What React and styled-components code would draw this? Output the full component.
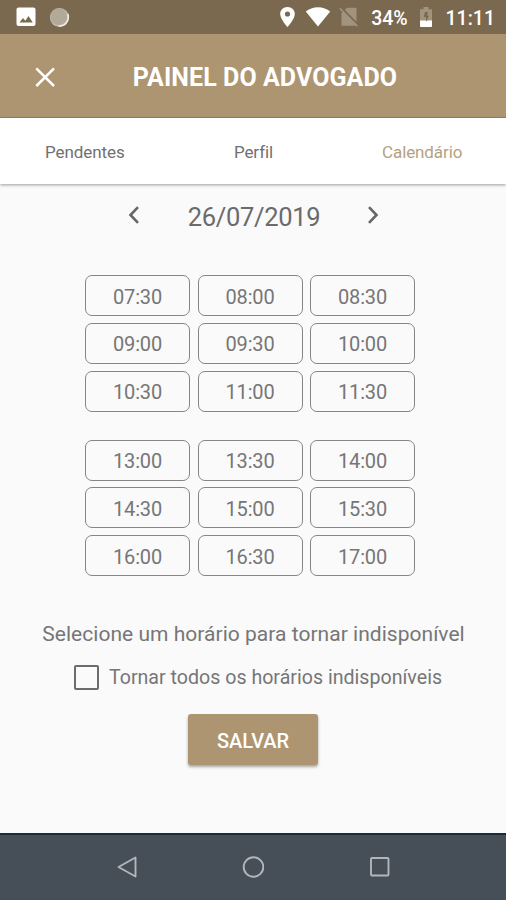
import React, { useState } from "react";
import styled, { createGlobalStyle } from "styled-components";

const GlobalStyle = createGlobalStyle`
  *, *::before, *::after { box-sizing: border-box; }
  body { margin: 0; background: #fafafa; }
  button { font: inherit; border: 0; padding: 0; margin: 0; background: none; }
`;

const Screen = styled.div`
  width: 506px;
  height: 900px;
  display: flex;
  flex-direction: column;
  overflow: hidden;
  background: #fafafa;
  color: #767676;
  font-family: Roboto, "Liberation Sans", sans-serif;
`;

const StatusBar = styled.div`
  height: 34px;
  flex: none;
  display: flex;
  justify-content: space-between;
  padding: 0 11px 0 16px;
  background: #7a694f;
  color: #fff;
`;

const StatusGroup = styled.div`
  display: flex;
  align-items: center;
`;

const StatusText = styled.span`
  font-size: 19.5px;
  line-height: 34px;
  padding-top: 3px;
  font-weight: 500;
  letter-spacing: ${(p) => p.$spacing};
  margin-left: ${(p) => p.$gap};
`;

const Glyph = styled.svg`
  display: block;
  flex: none;
  margin-left: ${(p) => p.$gap || "0"};
`;

const Header = styled.header`
  height: 84px;
  flex: none;
  display: grid;
  grid-template-columns: 90px 1fr 66px;
  align-items: center;
  background: #ae9572;
  border-bottom: 1px solid #a3805c;
  color: #fff;
`;

const CloseButton = styled.button`
  width: 20px;
  height: 20px;
  margin: 2px 0 0 35px;
  color: inherit;
`;

const Title = styled.h1`
  margin: 4px 0 0;
  text-align: center;
  font-size: 25px;
  line-height: 30px;
  font-weight: 700;
  letter-spacing: 0.08px;
`;

const Tabs = styled.nav`
  height: 66px;
  flex: none;
  display: grid;
  grid-template-columns: repeat(3, 1fr);
  background: #fff;
  box-shadow: 0 1px 3px rgba(0, 0, 0, 0.38);
`;

const Tab = styled.button`
  padding: 1px 0 0 1px;
  font-size: 17px;
  letter-spacing: -0.1px;
  color: ${(p) => (p.$active ? "#b5a17e" : "#707070")};
`;

const Content = styled.main`
  flex: 1;
  display: flex;
  flex-direction: column;
  align-items: center;
`;

const DatePicker = styled.div`
  width: 252px;
  height: 30px;
  margin-top: 18px;
  display: flex;
  align-items: center;
  justify-content: space-between;
  color: #6b6b6b;
`;

const ArrowButton = styled.button`
  width: 14px;
  height: 20px;
  margin-top: -5px;
  color: #666;
`;

const DateLabel = styled.span`
  font-size: 25.5px;
  line-height: 30px;
  padding-left: 2px;
  letter-spacing: -0.3px;
`;

const SlotGrid = styled.div`
  width: 330px;
  margin: ${(p) => p.$top} 6px 0 0;
  display: grid;
  grid-template-columns: repeat(3, 105px);
  grid-auto-rows: 41px;
  gap: 6.8px 7.5px;
`;

const Slot = styled.button`
  padding-top: 2px;
  border: 1.5px solid #858585;
  border-radius: 7px;
  color: #767676;
  font-size: 20px;
  letter-spacing: -0.15px;
`;

const Hint = styled.p`
  margin: 45px 0 0 1px;
  white-space: nowrap;
  font-size: 21px;
  line-height: 26px;
  letter-spacing: 0.03px;
`;

const CheckRow = styled.label`
  margin: 17px 0 0 10px;
  display: flex;
  align-items: center;
  gap: 10px;
  height: 26px;
  white-space: nowrap;
  font-size: 19.6px;
`;

const CheckBox = styled.input`
  appearance: none;
  width: 25px;
  height: 25px;
  margin: 0;
  border: 2px solid #6c6c6c;
  border-radius: 2px;
  &:checked { background: #ae9572; }
`;

const CheckText = styled.span`
  letter-spacing: 0.01px;
  padding-top: 1px;
`;

const SaveButton = styled.button`
  width: 130px;
  height: 51px;
  margin: 24px 0 0 0;
  padding-top: 2px;
  border-radius: 3px;
  background: #ae9572;
  box-shadow: 0 2px 3px rgba(0, 0, 0, 0.34);
  color: #fff;
  font-size: 20px;
  font-weight: 500;
  letter-spacing: -0.1px;
`;

const SystemNav = styled.footer`
  height: 67px;
  flex: none;
  display: flex;
  justify-content: center;
  gap: 104px;
  padding-top: 21px;
  border-top: 2px solid #1c2b3b;
  background: #464e57;
`;

const NavButton = styled.button`
  width: 22px;
  height: 22px;
`;

const MORNING = ["07:30", "08:00", "08:30", "09:00", "09:30", "10:00", "10:30", "11:00", "11:30"];
const AFTERNOON = ["13:00", "13:30", "14:00", "14:30", "15:00", "15:30", "16:00", "16:30", "17:00"];

function Slots({ times, top }) {
  return (
    <SlotGrid $top={top}>
      {times.map((t) => (
        <Slot key={t}>{t}</Slot>
      ))}
    </SlotGrid>
  );
}

function Status() {
  return (
    <StatusBar>
      <StatusGroup>
        <Glyph width="20" height="20" viewBox="0 0 20 20">
          <rect x="0.5" y="0.5" width="19" height="18.5" rx="2" fill="#fff" />
          <path d="M3.5 15.5 7 11l2.3 2.8L12.5 9l4.3 6.5z" fill="#7a694f" />
        </Glyph>
        <Glyph $gap="13px" width="21" height="21" viewBox="0 0 21 21">
          <circle cx="10.5" cy="10.5" r="9.6" fill="#c3b9aa" />
          <circle cx="9.8" cy="9.6" r="8.3" fill="#b3a999" />
          <path d="M18.8 7A9 9 0 0 1 9.5 19" fill="none" stroke="#f2eee6" strokeWidth="1.5" />
        </Glyph>
      </StatusGroup>
      <StatusGroup>
        <Glyph width="15" height="20" viewBox="0 0 15 20">
          <path
            fillRule="evenodd"
            fill="#fff"
            d="M7.5 0C3.3 0 .2 3.1.2 7c0 5.1 7.3 13 7.3 13s7.3-7.9 7.3-13c0-3.9-3.1-7-7.3-7zm0 4.4a2.6 2.6 0 1 1 0 5.2 2.6 2.6 0 0 1 0-5.2z"
          />
        </Glyph>
        <Glyph $gap="10px" width="26" height="20" viewBox="0 0 26 20">
          <path d="M13 19.5.8 4.6C4 1.900 8.300.3 13 .3s9 1.600 12.200 4.300z" fill="#fff" />
        </Glyph>
        <Glyph $gap="8px" width="20" height="20" viewBox="0 0 20 20">
          <path d="M8 .8h8.500q1 0 1 1v17h-15V6.300z" fill="#a1937e" />
          <path d="M2 .5 20 18.800" stroke="#7a694f" strokeWidth="2" />
          <path d="M.8 1.300 18.500 19.300" stroke="#a1937e" strokeWidth="1.600" />
        </Glyph>
        <StatusText $gap="12px" $spacing="-0.1px">34%</StatusText>
        <Glyph $gap="11px" width="14" height="22" viewBox="0 0 14 22">
          <path d="M4.500 1h5v2.200H13V21H1V3.200h3.500z" fill="#a1937e" />
          <path d="M1 14.500h12V20q0 1-1 1H2q-1 0-1-1z" fill="#fff" />
          <path d="M9 6H6l-1.300 5H7v5l3-6.500H8z" fill="#7a694f" />
        </Glyph>
        <StatusText $gap="13px" $spacing="0">11:11</StatusText>
      </StatusGroup>
    </StatusBar>
  );
}

export default function App() {
  const [all, setAll] = useState(false);
  return (
    <>
      <GlobalStyle />
      <Screen>
        <Status />
        <Header>
          <CloseButton aria-label="Fechar">
            <Glyph width="20" height="20" viewBox="0 0 20 20">
              <path d="M1.300 1.300 19 19M19 1.300 1.300 19" stroke="currentColor" strokeWidth="2.500" />
            </Glyph>
          </CloseButton>
          <Title>PAINEL DO ADVOGADO</Title>
        </Header>
        <Tabs>
          <Tab>Pendentes</Tab>
          <Tab>Perfil</Tab>
          <Tab $active>Calendário</Tab>
        </Tabs>
        <Content>
          <DatePicker>
            <ArrowButton aria-label="Dia anterior">
              <Glyph width="14" height="20" viewBox="0 0 14 20">
                <path d="M11 2.200 3.500 10l7.500 7.800" fill="none" stroke="currentColor" strokeWidth="2.600" />
              </Glyph>
            </ArrowButton>
            <DateLabel>26/07/2019</DateLabel>
            <ArrowButton aria-label="Próximo dia">
              <Glyph width="14" height="20" viewBox="0 0 14 20">
                <path d="M4 2.200 11.500 10 4 17.800" fill="none" stroke="currentColor" strokeWidth="2.600" />
              </Glyph>
            </ArrowButton>
          </DatePicker>
          <Slots times={MORNING} top="43px" />
          <Slots times={AFTERNOON} top="28px" />
          <Hint>Selecione um horário para tornar indisponível</Hint>
          <CheckRow>
            <CheckBox type="checkbox" checked={all} onChange={() => setAll(!all)} />
            <CheckText>Tornar todos os horários indisponíveis</CheckText>
          </CheckRow>
          <SaveButton>SALVAR</SaveButton>
        </Content>
        <SystemNav>
          <NavButton aria-label="Voltar">
            <Glyph width="22" height="22" viewBox="0 0 22 22">
              <path d="M19.500 1.500v19L2.500 11z" fill="none" stroke="#b1b6bb" strokeWidth="1.900" strokeLinejoin="round" />
            </Glyph>
          </NavButton>
          <NavButton aria-label="Início">
            <Glyph width="22" height="22" viewBox="0 0 22 22">
              <circle cx="11.500" cy="11" r="9.800" fill="none" stroke="#b1b6bb" strokeWidth="1.900" />
            </Glyph>
          </NavButton>
          <NavButton aria-label="Recentes">
            <Glyph width="22" height="22" viewBox="0 0 22 22">
              <rect x="3" y="2" width="17.500" height="17.500" rx="1" fill="none" stroke="#b1b6bb" strokeWidth="1.900" />
            </Glyph>
          </NavButton>
        </SystemNav>
      </Screen>
    </>
  );
}
